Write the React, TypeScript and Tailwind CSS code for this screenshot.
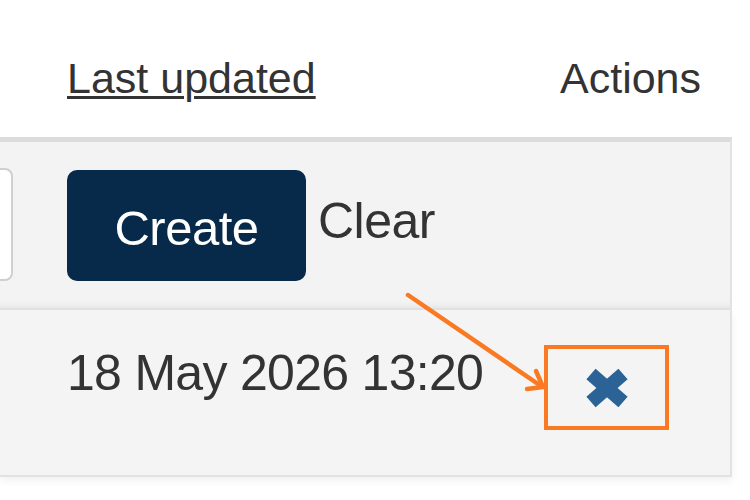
import React from "react";

function CrossIcon() {
  return (
    <svg viewBox="0 0 46 42" className="h-[42px] w-[46px] overflow-visible">
      <line x1="7" y1="7" x2="39" y2="35" stroke="#2b6396" strokeWidth="14" />
      <line x1="39" y1="7" x2="7" y2="35" stroke="#2b6396" strokeWidth="14" />
    </svg>
  );
}

export default function App() {
  return (
    <div
      className="relative h-[500px] w-[750px] overflow-hidden bg-white text-[#333]"
      style={{ fontFamily: '"Liberation Sans", Arial, sans-serif' }}
    >
      <div className="w-[732px]">
        {/* header */}
        <div className="grid h-[137px] grid-cols-[67px_477px_1fr] text-[43px] leading-none">
          <div />
          <div className="pt-[57px]">
            <span className="underline decoration-[3px] underline-offset-[3px]">Last updated</span>
          </div>
          <div className="pl-4 pt-[57px]">Actions</div>
        </div>

        {/* create row */}
        <div className="grid h-[173px] grid-cols-[67px_477px_1fr] border-t-[5px] border-r-2 border-b-2 border-[#e2e2e2] border-t-[#dcdcdc] bg-[#f3f3f3] shadow-[inset_0_-6px_6px_-4px_rgba(0,0,0,0.06)]">
          <div className="relative">
            <div className="absolute right-[54px] top-[26px] h-[113px] w-[120px] rounded-lg border-2 border-[#cfcfcf] bg-white" />
          </div>
          <div className="flex items-start pt-[28px]">
            <button className="flex h-[111px] w-[239px] items-center justify-center rounded-[10px] bg-[#072a4a] pt-[6px] text-[49px] leading-none tracking-[-0.5px] text-white">
              Create
            </button>
            <span className="ml-3 mt-[26px] text-[50px] leading-none tracking-[-0.5px] text-[#333]">Clear</span>
          </div>
          <div />
        </div>

        {/* data row */}
        <div className="grid h-[167px] grid-cols-[67px_477px_1fr] border-r-2 border-b-2 border-[#e2e2e2] bg-[#f4f4f4] shadow-[0_4px_8px_rgba(0,0,0,0.06)]">
          <div />
          <div className="pt-[38px] text-[50px] leading-none tracking-[-0.7px]">18 May 2026 13:20</div>
          <div className="pt-[35px]">
            <div className="flex h-[85px] w-[125px] items-center justify-center border-4 border-[#f97a22]">
              <CrossIcon />
            </div>
          </div>
        </div>
      </div>

      {/* annotation arrow */}
      <svg className="pointer-events-none absolute left-0 top-0 h-[500px] w-[750px]" viewBox="0 0 750 500">
        <line x1="408" y1="295" x2="541" y2="386" stroke="#f97a22" strokeWidth="4.5" strokeLinecap="round" />
        <polyline
          points="536,371 543,387 527,389"
          fill="none"
          stroke="#f97a22"
          strokeWidth="4.5"
          strokeLinecap="round"
          strokeLinejoin="round"
        />
      </svg>
    </div>
  );
}
